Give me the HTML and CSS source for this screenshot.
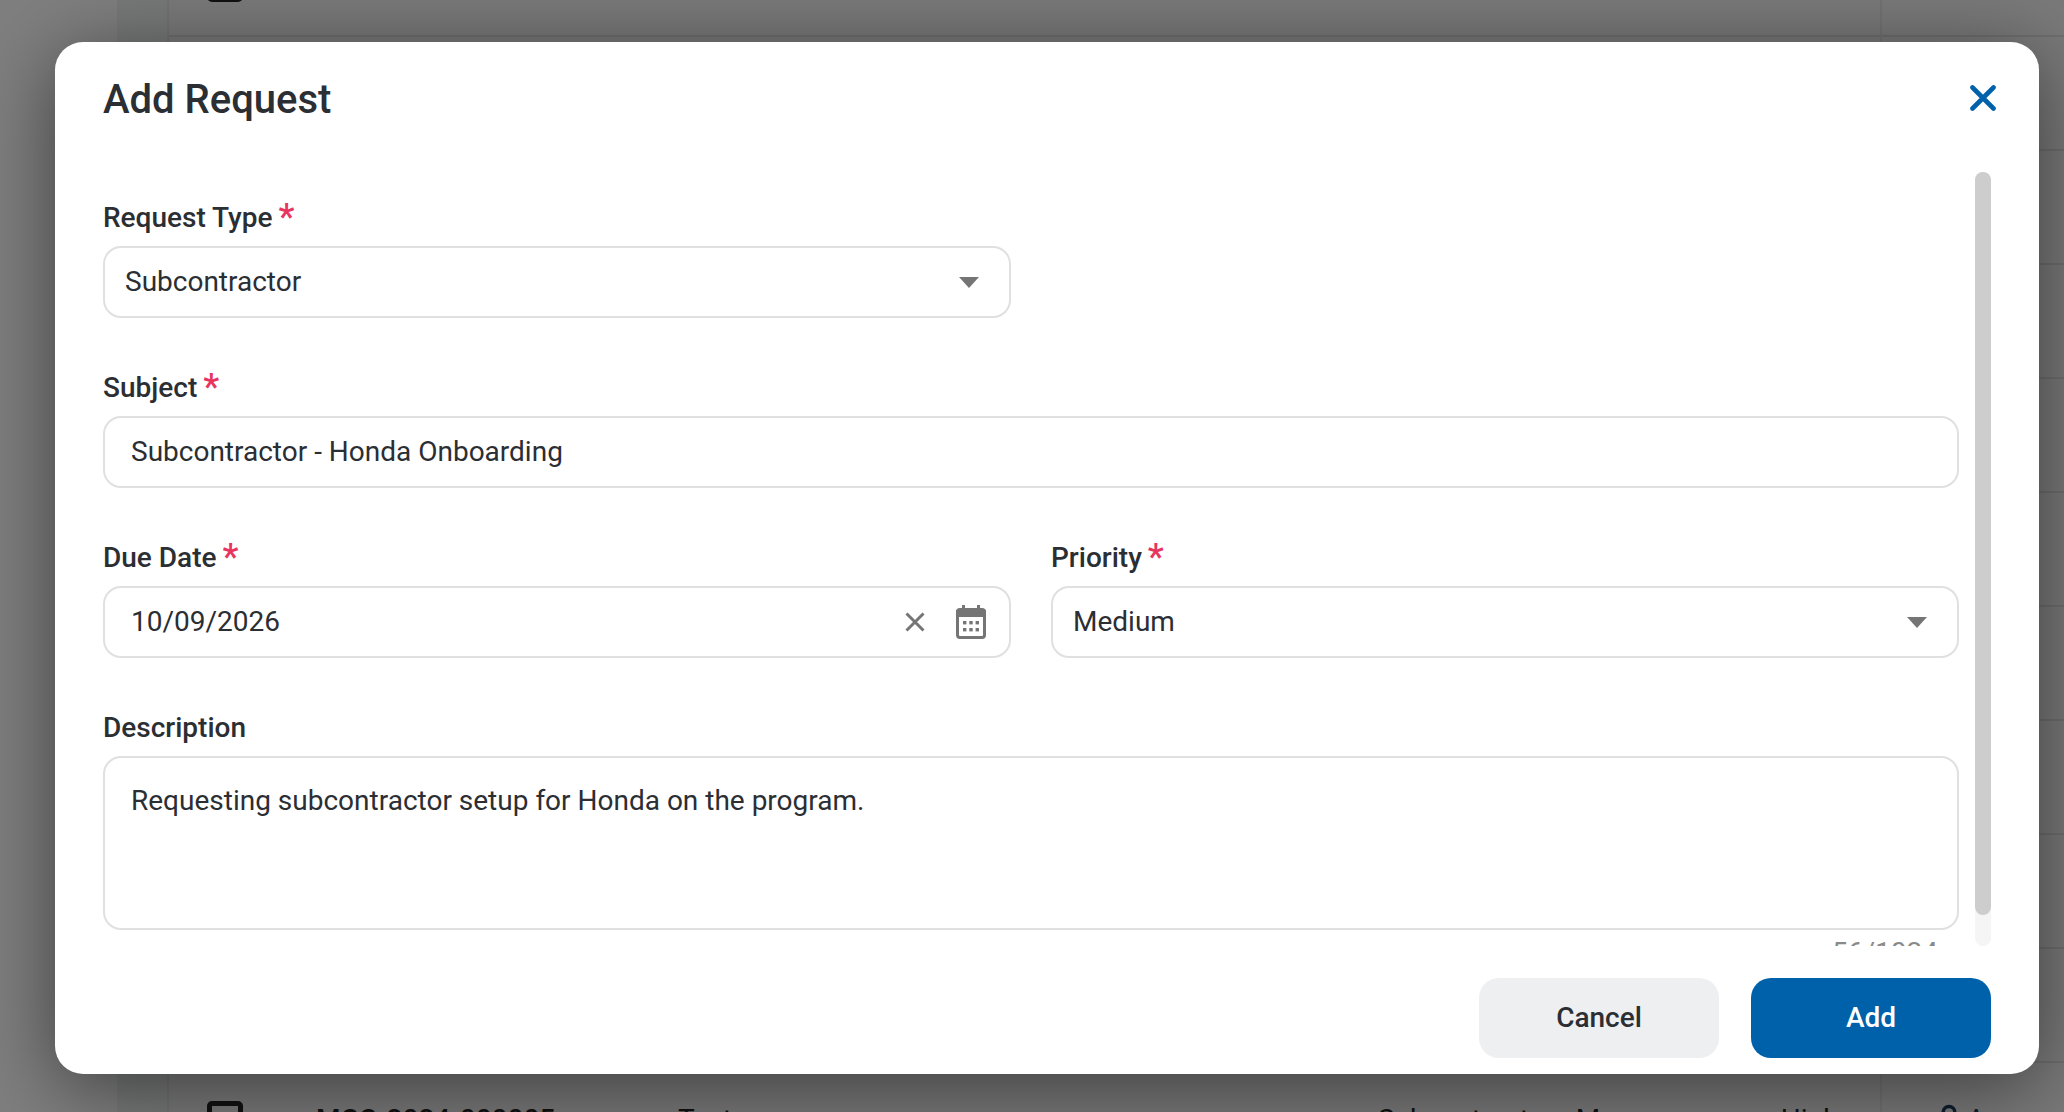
FILE: index.html
```html
<!DOCTYPE html>
<html lang="en">
<head>
<meta charset="utf-8">
<title>Add Request</title>
<link rel="stylesheet" href="styles.css">
</head>
<body>
<div class="page">
  <div class="rail"></div>
  <div class="gutter"></div>
  <div class="table">
    <div class="row first"><span class="box"></span></div>
    <div class="row"></div>
    <div class="row"></div>
    <div class="row"></div>
    <div class="row"></div>
    <div class="row"></div>
    <div class="row"></div>
    <div class="row"></div>
    <div class="row"></div>
    <div class="row"></div>
    <div class="row">
      <span class="box"></span>
      <span class="cell id">MCC-2024-000005</span>
      <span class="cell subj">Test</span>
      <span class="cell type">Subcontractor - M</span>
      <span class="cell prio"><span class="prio-mark">▲</span> High</span>
      <span class="cell who">
        <svg class="who-icon" viewBox="0 0 24 24"><circle cx="12" cy="8" r="5" fill="none" stroke="#1c3a5c" stroke-width="3"/></svg>
        <span>A</span>
      </span>
    </div>
  </div>
  <div class="backdrop"></div>
  <section class="dialog">
    <header class="dialog-head">
      <h1 class="title">Add Request</h1>
      <svg class="close" viewBox="0 0 26 26"><path d="M2.500 2.500 23.500 23.500M23.500 2.500 2.500 23.500"/></svg>
    </header>
    <div class="dialog-body">
      <form class="form">
        <div class="field">
          <div class="label">Request Type <span class="req">*</span></div>
          <div class="pair">
            <div class="control select">
              <span>Subcontractor</span>
              <svg class="caret" viewBox="0 0 20 11"><path d="M0 0h20L10 11z"/></svg>
            </div>
            <div></div>
          </div>
        </div>
        <div class="field">
          <div class="label">Subject <span class="req">*</span></div>
          <div class="control input"><span>Subcontractor - Honda Onboarding</span></div>
        </div>
        <div class="pair">
          <div class="field">
            <div class="label">Due Date <span class="req">*</span></div>
            <div class="control input">
              <span>10/09/2026</span>
              <span class="date-tools">
                <svg class="clear" viewBox="0 0 20 20"><path d="M1.500 1.500 18.500 18.500M18.500 1.500 1.500 18.500"/></svg>
                <svg class="cal" viewBox="0 0 30 34">
                  <path class="cal-line" d="M7.500 0v6M22.500 0v6"/>
                  <rect class="cal-line" x="1.500" y="4.500" width="27" height="28" rx="2.500"/>
                  <path class="cal-bar" d="M0 5h30v7H0z"/>
                  <g class="cal-dots">
                    <rect x="7" y="16" width="3.400" height="3.400"/><rect x="13.300" y="16" width="3.400" height="3.400"/><rect x="19.600" y="16" width="3.400" height="3.400"/>
                    <rect x="7" y="23" width="3.400" height="3.400"/><rect x="13.300" y="23" width="3.400" height="3.400"/><rect x="19.600" y="23" width="3.400" height="3.400"/>
                  </g>
                </svg>
              </span>
            </div>
          </div>
          <div class="field">
            <div class="label">Priority <span class="req">*</span></div>
            <div class="control select">
              <span>Medium</span>
              <svg class="caret" viewBox="0 0 20 11"><path d="M0 0h20L10 11z"/></svg>
            </div>
          </div>
        </div>
        <div class="field">
          <div class="label label-desc">Description</div>
          <div class="control area">Requesting subcontractor setup for Honda on the program.</div>
          <div class="counter">56/1024</div>
        </div>
      </form>
      <div class="scrollbar"><div class="thumb"></div></div>
    </div>
    <footer class="dialog-foot">
      <button class="btn cancel" type="button">Cancel</button>
      <button class="btn add" type="button">Add</button>
    </footer>
  </section>
</div>
</body>
</html>
```
FILE: styles.css
```css
* { box-sizing: border-box; }
html, body { margin: 0; padding: 0; height: 100%; overflow: hidden; }
body { font-family: Roboto, "Noto Sans", sans-serif; color: #2b2e33; }

.page {
  position: relative;
  display: flex;
  width: 2064px;
  height: 1112px;
  overflow: hidden;
  background: #fafafa;
}
.rail { width: 117px; background: #ffffff; }
.gutter { width: 50px; background: #f0f2f2; }
.table { position: relative; flex: 1; background: #f4f5f5; border-left: 2px solid #e6e6e6; }
.table::after {
  content: "";
  position: absolute;
  left: 1711px;
  top: 0;
  bottom: 0;
  width: 2px;
  background: #e6e6e6;
}

.row {
  display: grid;
  grid-template-columns: 36px 73px 362px 700px 372px 185px 1fr;
  align-items: center;
  height: 114px;
  padding-left: 38px;
  border-bottom: 2px solid #dedede;
  font-size: 28px;
  color: #222;
}
.row.first { height: 104px; margin-top: -67px; }
.box { width: 36px; height: 36px; border: 5px solid #222; border-radius: 5px; }
.cell { grid-row: 1; white-space: nowrap; }
.id { grid-column: 3; font-weight: 500; }
.subj { grid-column: 4; }
.type { grid-column: 5; }
.prio { grid-column: 6; }
.prio-mark { color: #b3202a; font-size: 24px; }
.who { grid-column: 7; display: flex; gap: 4px; color: #1c3a5c; }
.who-icon { width: 28px; height: 28px; }

.backdrop { position: absolute; inset: 0; background: rgba(0, 0, 0, .5); }

.dialog {
  position: absolute;
  left: 55px;
  top: 42px;
  width: 1984px;
  height: 1032px;
  display: flex;
  flex-direction: column;
  padding: 0 48px 16px;
  background: #fff;
  border-radius: 28px;
  box-shadow: 0 14px 80px rgba(0, 0, 0, .5);
}
.dialog-head {
  display: flex;
  align-items: center;
  justify-content: space-between;
  height: 130px;
  padding-bottom: 18px;
  flex: none;
}
.title { position: relative; top: 2px; margin: 0; font-size: 40px; line-height: 48px; font-weight: 500; color: #2b2e33; }
.close { width: 26px; height: 26px; margin-right: -5px; }
.close path { fill: none; stroke: #0061ab; stroke-width: 4.600; stroke-linecap: round; }

.dialog-body {
  display: flex;
  gap: 16px;
  height: 774px;
  flex: none;
  overflow: hidden;
}
.form {
  flex: 1;
  display: flex;
  flex-direction: column;
  gap: 49px;
  padding-top: 25px;
  min-width: 0;
}
.pair { display: grid; grid-template-columns: 1fr 1fr; column-gap: 40px; }
.label {
  height: 40px;
  margin-bottom: 9px;
  font-size: 28px;
  line-height: 40px;
  font-weight: 500;
  color: #2b2e33;
  white-space: nowrap;
}
.label-desc { position: relative; top: 1px; }
.req { position: relative; top: 2px; margin-left: -1px; font-size: 36px; line-height: 1; font-weight: 500; color: #e8355f; }

.control {
  display: flex;
  align-items: center;
  justify-content: space-between;
  height: 72px;
  padding-bottom: 2px;
  border: 2px solid #e0e0e0;
  border-radius: 18px;
  font-size: 28px;
  color: #2b2e33;
  background: #fff;
}
.select { padding-left: 20px; padding-right: 30px; }
.input { padding-left: 26px; padding-right: 23px; }
.caret { width: 20px; height: 11px; margin-top: 2px; }
.caret path { fill: #757575; }
.date-tools { display: flex; align-items: center; gap: 31px; margin-top: 2px; }
.clear { width: 20px; height: 20px; }
.clear path { fill: none; stroke: #757575; stroke-width: 3; }
.cal { width: 30px; height: 34px; }
.cal-line { fill: none; stroke: #757575; stroke-width: 3; }
.cal-bar { fill: #757575; }
.cal-dots { fill: #757575; }
.area {
  display: block;
  height: 174px;
  padding: 23px 26px;
  line-height: 40px;
}
.counter { margin-top: 7px; padding-right: 21px; text-align: right; font-size: 28px; line-height: 32px; color: #8a8a8a; }

.scrollbar { width: 16px; height: 100%; flex: none; border-radius: 8px; background: #f5f5f5; }
.thumb { width: 16px; height: 743px; border-radius: 8px; background: #cdcdcd; }

.dialog-foot {
  display: flex;
  justify-content: flex-end;
  gap: 32px;
  margin-top: 32px;
}
.btn {
  width: 240px;
  height: 80px;
  padding: 0 0 2px;
  border: 0;
  border-radius: 20px;
  font-family: inherit;
  font-size: 28px;
  font-weight: 500;
}
.cancel { background: #eeeff1; color: #2b2e33; }
.add { background: #0061ab; color: #fff; }
```
